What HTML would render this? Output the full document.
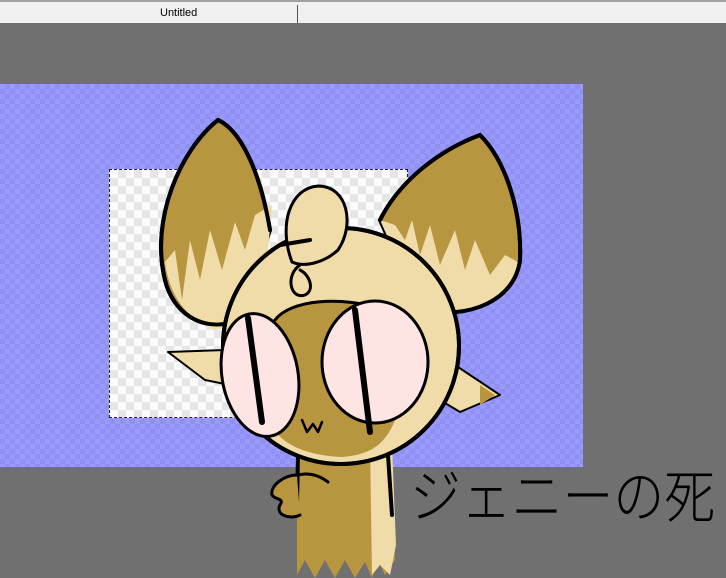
<!DOCTYPE html>
<html><head><style>
html,body{margin:0;padding:0;width:726px;height:578px;overflow:hidden;background:#707070;font-family:"Liberation Sans",sans-serif}
#tab{position:absolute;left:0;top:0;width:726px;height:23px;background:#f0f0f0;border-top:2px solid #a0a0a0;box-sizing:border-box}
#tab span{position:absolute;left:160px;top:5px;font-size:11px;color:#000}
#div{position:absolute;left:297px;top:3px;width:1px;height:18px;background:#555}
#blue{position:absolute;left:0;top:84px;width:583px;height:383px;background-color:#9999ff;
background-image:linear-gradient(45deg,#9090ee 25%,transparent 25%,transparent 75%,#9090ee 75%),linear-gradient(45deg,#9090ee 25%,transparent 25%,transparent 75%,#9090ee 75%);
background-size:10px 10px;background-position:0 0,5px 5px}
#white{position:absolute;left:109px;top:169px;width:299px;height:249px;background-color:#fafafa;
background-image:linear-gradient(45deg,#e6e6e6 25%,transparent 25%,transparent 75%,#e6e6e6 75%),linear-gradient(45deg,#e6e6e6 25%,transparent 25%,transparent 75%,#e6e6e6 75%);
background-size:16px 16px;background-position:0 0,8px 8px;border:1px dashed #222;box-sizing:border-box}
svg{position:absolute;left:0;top:0}
</style></head><body>
<div id="tab"><span>Untitled</span><div id="div"></div></div>
<div id="blue"></div>
<div id="white"></div>
<svg width="726" height="578" viewBox="0 0 726 578">
<g stroke="#000" stroke-width="4" stroke-linejoin="round" stroke-linecap="round">
<path d="M218 120 C180 150 150 220 165 280 C172 310 200 335 240 320 L270 230 C260 170 240 130 218 120 Z" fill="#b8963f"/>
<path d="M165 262 L175 250 L182 300 L190 240 L200 280 L210 230 L222 270 L235 222 L245 250 L255 215 L272 205 L262 320 L215 330 C190 320 170 300 165 262 Z" fill="#f0dca8" stroke="none"/>
<path d="M218 120 C180 150 150 220 165 280 C172 310 200 335 240 320 M270 230 C260 170 240 130 218 120" fill="none"/>
<path d="M480 135 C440 150 400 180 380 220 L420 310 C470 320 515 300 520 260 C522 210 505 160 480 135 Z" fill="#b8963f"/>
<path d="M380 220 L395 225 L405 240 L412 220 L420 255 L430 225 L440 265 L455 230 L465 270 L475 240 L490 275 L505 255 L518 262 C510 300 470 320 420 310 Z" fill="#f0dca8" stroke="none"/>
<path d="M480 135 C440 150 400 180 380 220 M420 310 C470 320 515 300 520 260 C522 210 505 160 480 135" fill="none"/>
<path d="M225 350 L168 352 L205 380 L230 385 Z" fill="#f0dca8" stroke-width="2"/>
<path d="M455 365 L500 395 L460 412 L440 400 Z" fill="#f0dca8" stroke-width="2"/>
<path d="M480 385 L495 395 L480 405 Z" fill="#b8963f" stroke="none"/>
<path d="M297 440 L390 440 L395 560 L385 575 L378 560 L372 578 L365 562 L355 578 L345 560 L335 578 L325 560 L315 578 L305 560 L297 575 Z" fill="#b8963f" stroke="none"/>
<path d="M370 445 L392 445 L396 545 L390 575 L380 565 L372 575 Z" fill="#f0dca8" stroke="none"/>
<path d="M298 455 L297 505 M388 455 L392 515" fill="none"/>
<circle cx="341" cy="346" r="118" fill="#f0dca8"/>
<path d="M275 320 C290 300 340 295 385 310 L395 420 C385 445 370 455 341 457 C300 455 275 440 270 420 Z" fill="#b8963f" stroke="none"/>
<path d="M275 320 C290 300 340 295 385 310" fill="none" stroke-width="3"/>
<circle cx="341" cy="346" r="118" fill="none"/>
<!-- tuft over head -->
<path d="M292 262 C278 225 290 188 318 186 C348 186 355 225 338 250 C325 262 305 268 292 262 Z" fill="#f0dca8" stroke-width="3"/>
<path d="M300 265 C285 275 290 300 305 295 C315 290 310 275 300 270" fill="none" stroke-width="3"/>
<path d="M280 245 L310 240" stroke-width="4"/>
<ellipse cx="260" cy="375" rx="38" ry="62" fill="#ffe4e4" stroke-width="3" transform="rotate(-10 260 375)"/>
<ellipse cx="375" cy="362" rx="53" ry="61" fill="#ffe4e4" stroke-width="3"/>
<path d="M248 318 L262 422" stroke-width="6"/>
<path d="M355 310 L370 432" stroke-width="6"/>
<path d="M302 420 L307 432 L313 424 L318 432 L322 422" fill="none" stroke-width="2.5"/>
<path d="M297 475 C285 475 270 485 272 495 C275 500 285 498 280 505 C275 515 290 520 300 515" fill="#b8963f" stroke-width="3"/>
<path d="M298 475 C310 472 320 476 328 482" fill="none" stroke-width="3"/>
</g>
<text x="410" y="517" font-family="'Noto Sans CJK JP',sans-serif" font-size="58" font-weight="300" fill="#000" textLength="305" lengthAdjust="spacingAndGlyphs">ジェニーの死</text>
</svg>
</body></html>
